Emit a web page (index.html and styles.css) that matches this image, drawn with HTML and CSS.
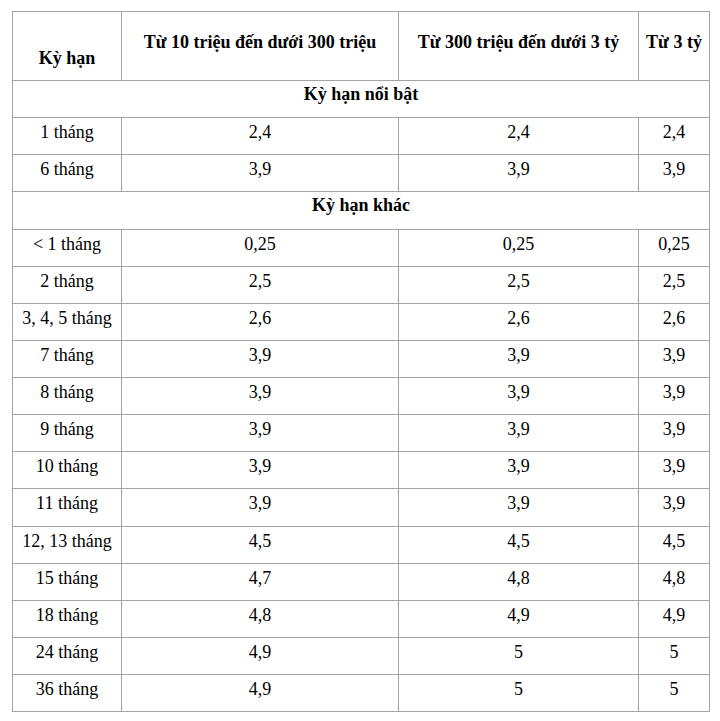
FILE: index.html
```html
<!DOCTYPE html>
<html lang="vi">
<head>
<meta charset="utf-8">
<title>Lãi suất</title>
<link rel="stylesheet" href="styles.css">
</head>
<body>
<table class="rates">
  <colgroup>
    <col class="c1"><col class="c2"><col class="c3"><col class="c4">
  </colgroup>
  <thead>
    <tr class="head">
      <th class="term-head">Kỳ hạn</th>
      <th>Từ 10 triệu đến dưới 300 triệu</th>
      <th>Từ 300 triệu đến dưới 3 tỷ</th>
      <th>Từ 3 tỷ</th>
    </tr>
  </thead>
  <tbody>
    <tr class="section"><td colspan="4">Kỳ hạn nổi bật</td></tr>
    <tr><td>1 tháng</td><td>2,4</td><td>2,4</td><td>2,4</td></tr>
    <tr><td>6 tháng</td><td>3,9</td><td>3,9</td><td>3,9</td></tr>
    <tr class="section"><td colspan="4">Kỳ hạn khác</td></tr>
    <tr><td>&lt; 1 tháng</td><td>0,25</td><td>0,25</td><td>0,25</td></tr>
    <tr><td>2 tháng</td><td>2,5</td><td>2,5</td><td>2,5</td></tr>
    <tr><td>3, 4, 5 tháng</td><td>2,6</td><td>2,6</td><td>2,6</td></tr>
    <tr><td>7 tháng</td><td>3,9</td><td>3,9</td><td>3,9</td></tr>
    <tr><td>8 tháng</td><td>3,9</td><td>3,9</td><td>3,9</td></tr>
    <tr><td>9 tháng</td><td>3,9</td><td>3,9</td><td>3,9</td></tr>
    <tr><td>10 tháng</td><td>3,9</td><td>3,9</td><td>3,9</td></tr>
    <tr><td>11 tháng</td><td>3,9</td><td>3,9</td><td>3,9</td></tr>
    <tr><td>12, 13 tháng</td><td>4,5</td><td>4,5</td><td>4,5</td></tr>
    <tr><td>15 tháng</td><td>4,7</td><td>4,8</td><td>4,8</td></tr>
    <tr><td>18 tháng</td><td>4,8</td><td>4,9</td><td>4,9</td></tr>
    <tr><td>24 tháng</td><td>4,9</td><td>5</td><td>5</td></tr>
    <tr><td>36 tháng</td><td>4,9</td><td>5</td><td>5</td></tr>
  </tbody>
</table>
</body>
</html>
```

FILE: styles.css
```css
html, body {
  margin: 0;
  padding: 0;
  background: #ffffff;
}

body {
  font-family: "Liberation Serif", "Times New Roman", serif;
  font-size: 18px;
  color: #000000;
}

.rates {
  margin: 11px 0 0 12px;
  width: 697px;
  table-layout: fixed;
  border-collapse: collapse;
  border: 1px solid #a4a4a4;
}

.c1 { width: 109px; }
.c2 { width: 277px; }
.c3 { width: 240px; }
.c4 { width: 71px; }

.rates th,
.rates td {
  border: 1px solid #a4a4a4;
  text-align: center;
  vertical-align: top;
  padding: 4px 2px 0;
  line-height: 20px;
  white-space: nowrap;
}

.rates tr {
  height: 37.14px;
}

.rates .head {
  height: 69px;
}

.rates th {
  font-weight: bold;
  padding-top: 20px;
}

.rates th.term-head {
  padding-top: 36px;
}

.section td {
  font-weight: bold;
  padding-top: 3px;
}
```
